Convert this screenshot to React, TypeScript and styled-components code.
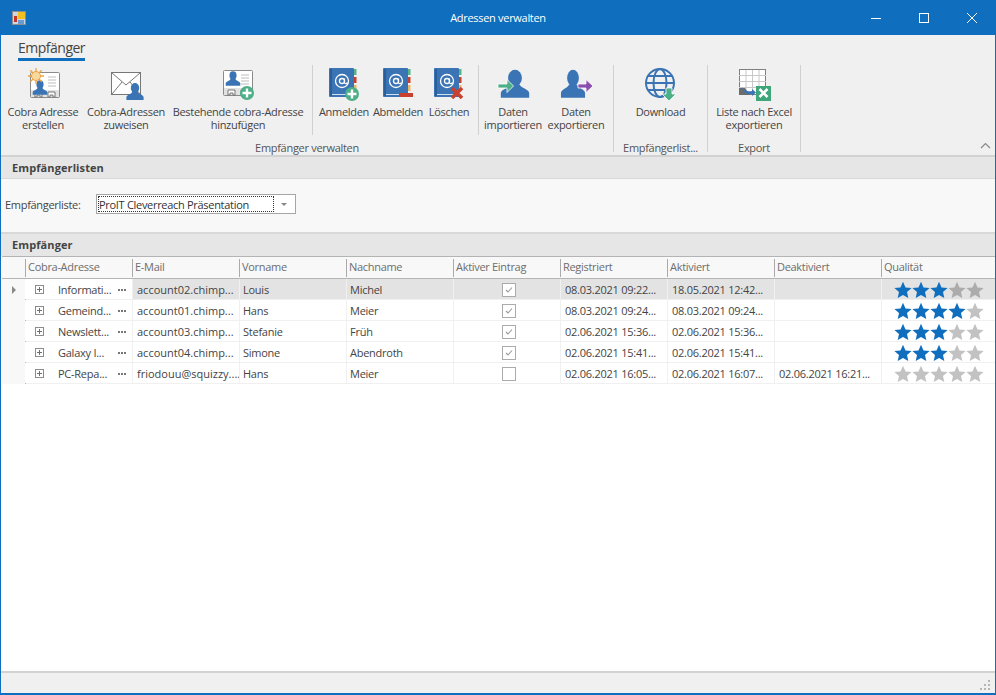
import React from "react";
import styled, { createGlobalStyle } from "styled-components";

const BLUE = "#106ebe";
const PERSON = "#3a74b4";
const GREEN = "#4caf87";
const RED = "#c8412f";

const GlobalStyle = createGlobalStyle`
  html, body {
    margin: 0;
    padding: 0;
    background: #fff;
    font-family: "Open Sans", "Liberation Sans", sans-serif;
    font-size: 11px;
    letter-spacing: -0.3px;
    color: #444;
  }
`;

/* ---------- icons ---------- */

const Icon = ({ children }: { children: React.ReactNode }) => (
  <svg width="36" height="36" viewBox="0 0 36 36">
    {children}
  </svg>
);

const Person = ({ x, y, s = 1, sy }: { x: number; y: number; s?: number; sy?: number }) => (
  <g transform={`translate(${x} ${y}) scale(${s} ${sy ?? s})`} fill={PERSON}>
    <ellipse cx="0" cy="-4" rx="4.2" ry="5" />
    <path d="M-3 0 C-3 2 -8 2.500 -8.600 5 L-8.600 8 L8.600 8 L8.600 5 C8 2.500 3 2 3 0 Z" />
  </g>
);

const PlusBadge = ({ cx, cy }: { cx: number; cy: number }) => (
  <g>
    <circle cx={cx} cy={cy} r="7" fill={GREEN} />
    <path d={`M${cx - 4.500} ${cy}H${cx + 4.500}M${cx} ${cy - 4.500}V${cy + 4.500}`} stroke="#fff" strokeWidth="2.400" />
  </g>
);

const CardFrame = ({ x, y }: { x: number; y: number }) => (
  <g transform={`translate(${x} ${y})`}>
    <rect x="0.500" y="0.500" width="29" height="25" rx="1" fill="#fff" stroke="#8a8a8a" />
    <rect x="1" y="18" width="28" height="7" fill="#e2e2e2" />
    <path d="M18 5h8M18 8h8M18 11h8M18 14h8" stroke="#bdbdbd" />
    <path d="M5 25v-5h7v5h-2v-2h-3v2zM18 25v-5h7v5h-2v-2h-3v2z" fill="#fff" stroke="#777" />
  </g>
);

const AddressBook = () => (
  <g>
    <rect x="3" y="1" width="25" height="29" fill={PERSON} rx="1" />
    <rect x="4" y="2" width="2" height="27" fill="#2b5f9b" />
    <path d="M6 27.500h22" stroke="#cfe0f0" />
    <rect x="28" y="2" width="2.500" height="6" fill="#55b48a" />
    <rect x="28" y="10" width="2.500" height="6" fill={RED} />
    <rect x="28" y="18" width="2.500" height="6" fill="#eeb766" />
    <circle cx="16" cy="14" r="6.500" fill="none" stroke="#fff" strokeWidth="1.300" />
    <circle cx="16" cy="14" r="2.500" fill="none" stroke="#fff" strokeWidth="1.300" />
    <path d="M18.500 11.500v4c0 1.500 2.200 1.500 3 0" fill="none" stroke="#fff" strokeWidth="1.200" />
  </g>
);

const SunCardIcon = () => (
  <Icon>
    <CardFrame x={5} y={5} />
    <Person x={15} y={21} s={0.85} />
    <g stroke="#eda33f" strokeWidth="1.300">
      <path d="M11 1v16M3 9h16M5.300 3.300l11.400 11.400M16.700 3.300L5.300 14.700" />
    </g>
    <circle cx="11" cy="9" r="4.500" fill="#f7d9a0" stroke="#eda33f" />
  </Icon>
);

const EnvelopeIcon = () => (
  <Icon>
    <rect x="3.500" y="5.500" width="29" height="22" fill="#fff" stroke="#777" />
    <path d="M4 6l14 12L32 6M4 27l10-12M32 27L22 15" fill="none" stroke="#777" />
    <Person x={27} y={25} />
  </Icon>
);

const CardPlusIcon = () => (
  <Icon>
    <CardFrame x={3} y={3} />
    <Person x={13} y={12} s={0.85} />
    <PlusBadge cx={27} cy={26} />
  </Icon>
);

const BookPlusIcon = () => (
  <Icon>
    <AddressBook />
    <PlusBadge cx={26} cy={27} />
  </Icon>
);

const BookMinusIcon = () => (
  <Icon>
    <AddressBook />
    <rect x="19" y="26" width="14" height="4" fill={RED} />
  </Icon>
);

const BookDeleteIcon = () => (
  <Icon>
    <AddressBook />
    <path d="M21 21l10 10M31 21L21 31" stroke={RED} strokeWidth="3.600" />
  </Icon>
);

const ImportIcon = () => (
  <Icon>
    <Person x={20} y={17.6} s={1.65} />
    <path d="M3 17h9v-4.500l6.500 6.500-6.500 6.500V21H3z" fill={GREEN} stroke="#fff" strokeWidth="0.800" />
  </Icon>
);

const ExportIcon = () => (
  <Icon>
    <Person x={15} y={17.6} s={1.4} sy={1.65} />
    <path d="M20 17h8v-4.500l7 6.500-7 6.500V21h-8z" fill="#8a4fae" stroke="#fff" strokeWidth="0.800" />
  </Icon>
);

const GlobeIcon = () => (
  <Icon>
    <g fill="none" stroke={PERSON} strokeWidth="2">
      <circle cx="17" cy="16" r="14" />
      <ellipse cx="17" cy="16" rx="6.500" ry="14" />
      <path d="M3 16h28M5 9h24M5 23h24" />
    </g>
    <path d="M23 21h6v6h4l-7 7-7-7h4z" fill={GREEN} stroke="#fff" strokeWidth="0.800" />
  </Icon>
);

const ExcelIcon = () => (
  <Icon>
    <rect x="3.500" y="2.500" width="26" height="25" fill="#fff" stroke="#808080" />
    <path d="M3 8.500h27M3 14.500h27M3 20.500h27M10 3v25M16.500 3v25M23 3v25" stroke="#c8c8c8" />
    <path d="M3 21h6l5 7H3z" fill="#6d6d6d" />
    <path d="M6 20c2 4 6 5 10 4v-2l4 3.500-4 3.500v-2c-5 1-9-2-10-7z" fill={PERSON} />
    <rect x="20" y="19" width="15" height="15" fill="#3fa67c" />
    <path d="M23.500 22l8 8M31.500 22l-8 8" stroke="#fff" strokeWidth="2.600" />
  </Icon>
);

const AppLogo = () => (
  <svg width="14" height="14" viewBox="0 0 14 14">
    <rect x="0.500" y="0.500" width="13" height="13" fill="#cfd6de" stroke="#8f8f8f" />
    <rect x="6" y="1" width="7" height="7" fill="#f2c01e" />
    <rect x="2" y="5" width="3" height="6" fill="#c4352b" />
    <rect x="6" y="9" width="6" height="4" fill="#6a9bd4" />
  </svg>
);

const Star = ({ color }: { color: string }) => (
  <svg width="18" height="18" viewBox="0 0 18 18">
    <path d="M9 .8l2.500 5.600 6.100.6-4.600 4.100 1.300 6L9 14l-5.300 3.100 1.300-6L.4 7l6.100-.6z" fill={color} />
  </svg>
);

/* ---------- window chrome ---------- */

const Window = styled.div`
  width: 996px;
  height: 695px;
  box-sizing: border-box;
  display: flex;
  flex-direction: column;
  overflow: hidden;
  background: #fff;
  border-left: 1px solid ${BLUE};
  border-right: 1px solid ${BLUE};
  border-bottom: 2px solid ${BLUE};
`;

const TitleBar = styled.div`
  height: 35px;
  flex: none;
  margin: 0 -1px;
  background: ${BLUE};
  color: #fff;
  display: grid;
  grid-template-columns: 144px 1fr 144px;
  align-items: center;
`;

const TitleLogo = styled.div`
  display: flex;
  padding: 1px 0 0 12px;
`;

const TitleText = styled.div`
  text-align: center;
`;

const WindowControls = styled.div`
  display: flex;
  height: 100%;
`;

const WindowButton = styled.div`
  width: 48px;
  display: flex;
  align-items: center;
  justify-content: center;
`;

/* ---------- ribbon ---------- */

const Ribbon = styled.div`
  height: 122px;
  flex: none;
  box-sizing: border-box;
  background: #f0f0f0;
  border-bottom: 2px solid #d2d2d2;
  display: flex;
  flex-direction: column;
`;

const TabRow = styled.div`
  height: 30px;
  flex: none;
  padding-left: 17px;
`;

const Tab = styled.div`
  display: inline-block;
  height: 23px;
  line-height: 26px;
  font-size: 14px;
  letter-spacing: -0.5px;
  color: #444;
  border-bottom: 3px solid ${BLUE};
`;

const GroupRow = styled.div`
  display: flex;
  height: 87px;
  position: relative;
`;

const Group = styled.div<{ $width: number }>`
  width: ${(p) => p.$width}px;
  height: 87px;
  box-sizing: border-box;
  border-right: 1px solid #d0d0d0;
  display: flex;
  flex-direction: column;
`;

const ButtonSets = styled.div`
  display: flex;
  flex: none;
  height: 73px;
`;

const ButtonSet = styled.div<{ $pad?: number; $end?: number; $line?: boolean }>`
  display: flex;
  height: 70px;
  padding-left: ${(p) => p.$pad ?? 0}px;
  padding-right: ${(p) => p.$end ?? 0}px;
  border-right: ${(p) => (p.$line ? "1px solid #d0d0d0" : "none")};
`;

const RibbonButton = styled.div<{ $width: number }>`
  width: ${(p) => p.$width}px;
  padding-top: 2px;
  display: flex;
  flex-direction: column;
  align-items: center;
  flex: none;
  svg {
    flex: none;
  }
`;

const ButtonText = styled.div`
  margin-top: 2px;
  line-height: 13px;
  text-align: center;
  white-space: pre;
  color: #444;
`;

const GroupLabel = styled.div`
  flex: none;
  margin-top: 3px;
  line-height: 14px;
  text-align: center;
  white-space: nowrap;
  color: #555;
`;

const CollapseButton = styled.div`
  position: absolute;
  right: 4px;
  bottom: 3px;
  display: flex;
`;

/* ---------- sections ---------- */

const SectionHeader = styled.div<{ $height: number; $lift?: number }>`
  height: ${(p) => p.$height}px;
  flex: none;
  box-sizing: border-box;
  background: #e6e6e6;
  padding: 0 0 ${(p) => p.$lift ?? 0}px 11px;
  display: flex;
  align-items: center;
  font-weight: 700;
  letter-spacing: 0.1px;
  color: #444;
`;

const ListPanel = styled.div`
  height: 56px;
  flex: none;
  box-sizing: border-box;
  border-top: 1px solid #d8d8d8;
  border-bottom: 2px solid #d8d8d8;
  background: #f8f8f8;
  padding: 0 0 3px 4px;
  display: flex;
  align-items: center;
  gap: 16px;
`;

const FieldLabel = styled.label`
  width: 75px;
  color: #444;
`;

const Combo = styled.div`
  width: 200px;
  height: 20px;
  box-sizing: border-box;
  border: 1px solid #a6a6a6;
  background: #fff;
  padding: 1px;
  display: flex;
  align-items: center;
`;

const ComboValue = styled.div`
  width: 176px;
  height: 16px;
  line-height: 15px;
  box-sizing: border-box;
  border: 1px dotted #333;
  color: #333;
  white-space: nowrap;
  overflow: hidden;
`;

const ComboArrow = styled.div`
  margin-left: 7px;
  width: 0;
  height: 0;
  border-left: 3px solid transparent;
  border-right: 3px solid transparent;
  border-top: 3px solid #888;
`;

/* ---------- grid ---------- */

const COLUMNS = "23px repeat(8, 107px) 1fr";

const GridHead = styled.div`
  display: grid;
  grid-template-columns: ${COLUMNS};
  height: 23px;
  flex: none;
  box-sizing: border-box;
  margin-left: 1px;
  padding: 2px 0 1px;
  border-top: 1px solid #b4b4b4;
  border-bottom: 1px solid #b4b4b4;
  background: #f8f8f8;
`;

const HeadCell = styled.div`
  border-left: 1px solid #aaa;
  padding-left: 2px;
  line-height: 16px;
  color: #6d6d6d;
  white-space: nowrap;
  overflow: hidden;
  &:first-child {
    border-left: none;
  }
`;

const GridBody = styled.div`
  flex: 1;
  margin-left: 1px;
  background: #fff;
`;

const GridRow = styled.div<{ $selected?: boolean }>`
  display: grid;
  grid-template-columns: ${COLUMNS};
  height: 21px;
  box-sizing: border-box;
  border-bottom: 1px solid #f0f0f0;
  background: ${(p) => (p.$selected ? "#e3e3e3" : "#fff")};
`;

const Indicator = styled.div`
  display: flex;
  align-items: center;
  justify-content: center;
  padding-left: 1px;
  background: #f8f8f8;
  border-right: 1px solid #b4b4b4;
  margin: 0 -1px -1px 0;
`;

const SelectedMark = styled.div`
  width: 0;
  height: 0;
  border-top: 4px solid transparent;
  border-bottom: 4px solid transparent;
  border-left: 4px solid #8a8a8a;
`;

const Cell = styled.div`
  box-sizing: border-box;
  border-left: 1px solid #f0f0f0;
  padding: 1px 0 0 3px;
  line-height: 19px;
  letter-spacing: -0.25px;
  color: #444;
  white-space: nowrap;
  overflow: hidden;
`;

const MailCell = styled(Cell)`
  padding-left: 4px;
  letter-spacing: 0;
`;

const DateCell = styled(Cell)`
  padding-left: 4px;
`;

const AddressCell = styled.div`
  box-sizing: border-box;
  padding-top: 1px;
  background: #fff;
  display: grid;
  grid-template-columns: 33px 1fr 14px;
  align-items: center;
  line-height: 19px;
  letter-spacing: -0.25px;
  color: #444;
  white-space: nowrap;
  overflow: hidden;
`;

const Expander = styled.div`
  justify-self: end;
  margin-right: 14px;
  display: flex;
`;

const EditorDots = styled.div`
  display: flex;
`;

const CheckCell = styled(Cell)`
  display: flex;
  align-items: center;
  justify-content: center;
`;

const CheckBox = styled.div`
  width: 14px;
  height: 14px;
  box-sizing: border-box;
  border: 1px solid #ababab;
  background: #fff;
  display: flex;
`;

const StarCell = styled(Cell)`
  display: flex;
  align-items: center;
  justify-content: center;
  padding-left: 0;
`;

/* ---------- status bar ---------- */

const StatusBar = styled.div`
  height: 22px;
  flex: none;
  box-sizing: border-box;
  border-top: 2px solid #d2d2d2;
  background: #f0f0f0;
  display: flex;
  justify-content: flex-end;
  align-items: flex-end;
  padding: 0 5px 3px 0;
`;

/* ---------- data ---------- */

const columns = [
  "",
  "Cobra-Adresse",
  "E-Mail",
  "Vorname",
  "Nachname",
  "Aktiver Eintrag",
  "Registriert",
  "Aktiviert",
  "Deaktiviert",
  "Qualität",
];

const rows = [
  { cobra: "Informati...", mail: "account02.chimp...", first: "Louis", last: "Michel", active: true, reg: "08.03.2021 09:22...", act: "18.05.2021 12:42...", deact: "", stars: 3 },
  { cobra: "Gemeind...", mail: "account01.chimp...", first: "Hans", last: "Meier", active: true, reg: "08.03.2021 09:24...", act: "08.03.2021 09:24...", deact: "", stars: 4 },
  { cobra: "Newslett...", mail: "account03.chimp...", first: "Stefanie", last: "Früh", active: true, reg: "02.06.2021 15:36...", act: "02.06.2021 15:36...", deact: "", stars: 3 },
  { cobra: "Galaxy I...", mail: "account04.chimp...", first: "Simone", last: "Abendroth", active: true, reg: "02.06.2021 15:41...", act: "02.06.2021 15:41...", deact: "", stars: 3 },
  { cobra: "PC-Repa...", mail: "friodouu@squizzy....", first: "Hans", last: "Meier", active: false, reg: "02.06.2021 16:05...", act: "02.06.2021 16:07...", deact: "02.06.2021 16:21...", stars: 0 },
];

const App = () => (
  <Window>
    <GlobalStyle />
    <TitleBar>
      <TitleLogo>
        <AppLogo />
      </TitleLogo>
      <TitleText>Adressen verwalten</TitleText>
      <WindowControls>
        <WindowButton>
          <svg width="10" height="10" viewBox="0 0 10 10">
            <path d="M0 5.500h10" stroke="#fff" />
          </svg>
        </WindowButton>
        <WindowButton>
          <svg width="10" height="10" viewBox="0 0 10 10">
            <rect x="0.500" y="0.500" width="9" height="9" fill="none" stroke="#fff" />
          </svg>
        </WindowButton>
        <WindowButton>
          <svg width="10" height="10" viewBox="0 0 10 10">
            <path d="M0 0l10 10M10 0L0 10" stroke="#fff" />
          </svg>
        </WindowButton>
      </WindowControls>
    </TitleBar>

    <Ribbon>
      <TabRow>
        <Tab>Empfänger</Tab>
      </TabRow>
      <GroupRow>
        <Group $width={613}>
          <ButtonSets>
            <ButtonSet $end={3} $line>
              <RibbonButton $width={84}>
                <SunCardIcon />
                <ButtonText>{"Cobra Adresse\nerstellen"}</ButtonText>
              </RibbonButton>
              <RibbonButton $width={82}>
                <EnvelopeIcon />
                <ButtonText>{"Cobra-Adressen\nzuweisen"}</ButtonText>
              </RibbonButton>
              <RibbonButton $width={142}>
                <CardPlusIcon />
                <ButtonText>{"Bestehende cobra-Adresse\nhinzufügen"}</ButtonText>
              </RibbonButton>
            </ButtonSet>
            <ButtonSet $pad={4} $end={5} $line>
              <RibbonButton $width={54}>
                <BookPlusIcon />
                <ButtonText>Anmelden</ButtonText>
              </RibbonButton>
              <RibbonButton $width={54}>
                <BookMinusIcon />
                <ButtonText>Abmelden</ButtonText>
              </RibbonButton>
              <RibbonButton $width={48}>
                <BookDeleteIcon />
                <ButtonText>Löschen</ButtonText>
              </RibbonButton>
            </ButtonSet>
            <ButtonSet>
              <RibbonButton $width={68}>
                <ImportIcon />
                <ButtonText>{"Daten\nimportieren"}</ButtonText>
              </RibbonButton>
              <RibbonButton $width={58}>
                <ExportIcon />
                <ButtonText>{"Daten\nexportieren"}</ButtonText>
              </RibbonButton>
            </ButtonSet>
          </ButtonSets>
          <GroupLabel>Empfänger verwalten</GroupLabel>
        </Group>
        <Group $width={94}>
          <ButtonSets>
            <ButtonSet>
              <RibbonButton $width={93}>
                <GlobeIcon />
                <ButtonText>Download</ButtonText>
              </RibbonButton>
            </ButtonSet>
          </ButtonSets>
          <GroupLabel>Empfängerlist...</GroupLabel>
        </Group>
        <Group $width={93}>
          <ButtonSets>
            <ButtonSet>
              <RibbonButton $width={92}>
                <ExcelIcon />
                <ButtonText>{"Liste nach Excel\nexportieren"}</ButtonText>
              </RibbonButton>
            </ButtonSet>
          </ButtonSets>
          <GroupLabel>Export</GroupLabel>
        </Group>
        <CollapseButton>
          <svg width="11" height="7" viewBox="0 0 11 7">
            <path d="M1 6l4.500-4.500L10 6" fill="none" stroke="#888" strokeWidth="1.200" />
          </svg>
        </CollapseButton>
      </GroupRow>
    </Ribbon>

    <SectionHeader $height={21}>Empfängerlisten</SectionHeader>
    <ListPanel>
      <FieldLabel>Empfängerliste:</FieldLabel>
      <Combo>
        <ComboValue>ProIT Cleverreach Präsentation</ComboValue>
        <ComboArrow />
      </Combo>
    </ListPanel>
    <SectionHeader $height={22} $lift={2}>Empfänger</SectionHeader>

    <GridHead>
      {columns.map((name) => (
        <HeadCell key={name}>{name}</HeadCell>
      ))}
    </GridHead>
    <GridBody>
      {rows.map((row, index) => (
        <GridRow key={row.mail} $selected={index === 0}>
          <Indicator>{index === 0 && <SelectedMark />}</Indicator>
          <AddressCell>
            <Expander>
              <svg width="9" height="9" viewBox="0 0 9 9">
                <rect x="0.500" y="0.500" width="8" height="8" fill="#fff" stroke="#8c8c8c" />
                <path d="M2 4.500h5M4.500 2v5" stroke="#6f6f6f" />
              </svg>
            </Expander>
            <span>{row.cobra}</span>
            <EditorDots>
              <svg width="8" height="2" viewBox="0 0 8 2" fill="#777">
                <rect x="0" y="0" width="2" height="2" />
                <rect x="3" y="0" width="2" height="2" />
                <rect x="6" y="0" width="2" height="2" />
              </svg>
            </EditorDots>
          </AddressCell>
          <MailCell>{row.mail}</MailCell>
          <Cell>{row.first}</Cell>
          <Cell>{row.last}</Cell>
          <CheckCell>
            <CheckBox>
              {row.active && (
                <svg width="12" height="12" viewBox="0 0 12 12">
                  <path d="M3 6l2 2 4-4.500" fill="none" stroke="#9a9a9a" strokeWidth="1.100" />
                </svg>
              )}
            </CheckBox>
          </CheckCell>
          <DateCell>{row.reg}</DateCell>
          <DateCell>{row.act}</DateCell>
          <DateCell>{row.deact}</DateCell>
          <StarCell>
            {[0, 1, 2, 3, 4].map((n) => (
              <Star key={n} color={n < row.stars ? BLUE : index === 0 ? "#acacac" : "#c2c2c2"} />
            ))}
          </StarCell>
        </GridRow>
      ))}
    </GridBody>

    <StatusBar>
      <svg width="10" height="10" viewBox="0 0 10 10" fill="#b5b5b5">
        <rect x="8" y="0" width="2" height="2" />
        <rect x="4" y="4" width="2" height="2" />
        <rect x="8" y="4" width="2" height="2" />
        <rect x="0" y="8" width="2" height="2" />
        <rect x="4" y="8" width="2" height="2" />
        <rect x="8" y="8" width="2" height="2" />
      </svg>
    </StatusBar>
  </Window>
);

export default App;
